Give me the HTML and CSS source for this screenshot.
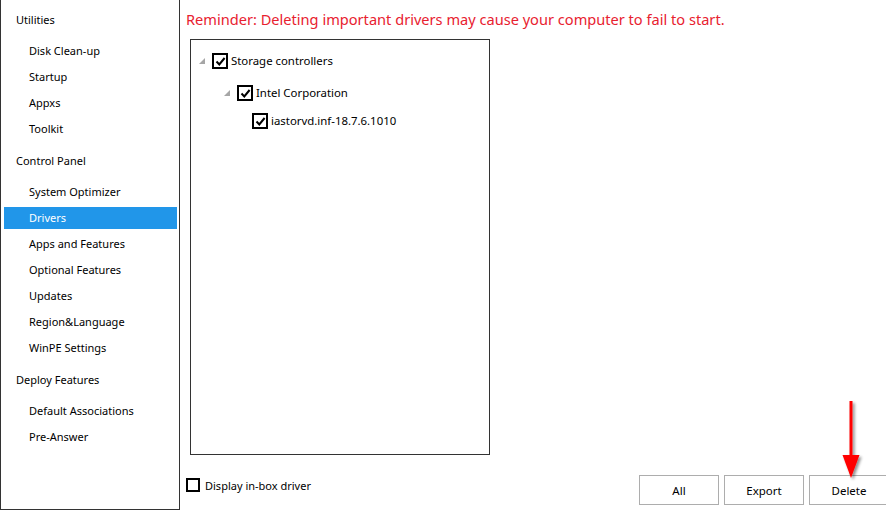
FILE: index.html
```html
<!DOCTYPE html>
<html>
<head>
<meta charset="utf-8">
<link rel="stylesheet" href="styles.css">
</head>
<body>
<div class="app">
  <nav class="sidebar">
    <div class="group">
      <div class="group-title">Utilities</div>
      <div class="item">Disk Clean-up</div>
      <div class="item">Startup</div>
      <div class="item">Appxs</div>
      <div class="item">Toolkit</div>
    </div>
    <div class="group">
      <div class="group-title">Control Panel</div>
      <div class="item">System Optimizer</div>
      <div class="item selected">Drivers</div>
      <div class="item">Apps and Features</div>
      <div class="item">Optional Features</div>
      <div class="item">Updates</div>
      <div class="item">Region&amp;Language</div>
      <div class="item">WinPE Settings</div>
    </div>
    <div class="group">
      <div class="group-title">Deploy Features</div>
      <div class="item">Default Associations</div>
      <div class="item">Pre-Answer</div>
    </div>
  </nav>
  <main class="content">
    <div class="reminder">Reminder: Deleting important drivers may cause your computer to fail to start.</div>
    <div class="tree">
      <div class="tree-row level1">
        <svg class="toggle" width="6" height="6" viewBox="0 0 6 6"><polygon points="6,0 6,6 0,6" fill="#a6a6a6"/></svg>
        <span class="check checked"><svg width="11" height="11" viewBox="0 0 11 11"><path d="M1.5 5.5 L4.3 8.5 L9.6 2" fill="none" stroke="#000" stroke-width="2"/></svg></span>
        <span class="label">Storage controllers</span>
      </div>
      <div class="tree-row level2">
        <svg class="toggle" width="6" height="6" viewBox="0 0 6 6"><polygon points="6,0 6,6 0,6" fill="#a6a6a6"/></svg>
        <span class="check checked"><svg width="11" height="11" viewBox="0 0 11 11"><path d="M1.5 5.5 L4.3 8.5 L9.6 2" fill="none" stroke="#000" stroke-width="2"/></svg></span>
        <span class="label">Intel Corporation</span>
      </div>
      <div class="tree-row level3">
        <span class="check checked"><svg width="11" height="11" viewBox="0 0 11 11"><path d="M1.5 5.5 L4.3 8.5 L9.6 2" fill="none" stroke="#000" stroke-width="2"/></svg></span>
        <span class="label">iastorvd.inf-18.7.6.1010</span>
      </div>
    </div>
    <div class="bottom">
      <label class="inbox"><span class="check small"></span><span>Display in-box driver</span></label>
      <div class="buttons">
        <button class="btn">All</button>
        <button class="btn">Export</button>
        <button class="btn">Delete</button>
      </div>
    </div>
  </main>
</div>
<svg class="arrow" width="30" height="84" viewBox="0 0 30 84">
  <defs>
    <filter id="sh" x="-50%" y="-20%" width="200%" height="140%">
      <feGaussianBlur in="SourceAlpha" stdDeviation="1.5"/>
      <feOffset dx="2" dy="2" result="b"/>
      <feComponentTransfer><feFuncA type="linear" slope="0.45"/></feComponentTransfer>
      <feMerge><feMergeNode/><feMergeNode in="SourceGraphic"/></feMerge>
    </filter>
  </defs>
  <g filter="url(#sh)">
    <rect x="12.5" y="2" width="3" height="58" fill="#ff0000"/>
    <polygon points="5.5,56 22.5,56 14,79" fill="#ff0000"/>
  </g>
</svg>
</body>
</html>
```
FILE: styles.css
```css
html, body {
  margin: 0;
  padding: 0;
  background: #fff;
  overflow: hidden;
}
body {
  width: 886px;
  height: 510px;
  font-family: "Noto Sans", "Open Sans", sans-serif;
  font-size: 11px;
  color: #000;
  position: relative;
}
.app {
  display: flex;
  height: 510px;
}
.sidebar {
  box-sizing: border-box;
  width: 180px;
  height: 510px;
  border: 1px solid #333;
  border-top: none;
  padding: 10px 2px 0 3px;
  display: flex;
  flex-direction: column;
  gap: 11px;
}
.group {
  display: flex;
  flex-direction: column;
}
.group-title {
  height: 20px;
  line-height: 20px;
  padding-left: 12px;
  margin-bottom: 6px;
}
.item {
  height: 22px;
  line-height: 22px;
  padding-left: 25px;
  margin-top: 4px;
}
.item.selected {
  background: #2196e9;
  color: #fff;
}
.content {
  flex: 1;
  display: flex;
  flex-direction: column;
  padding: 8px 0 0 6px;
}
.reminder {
  color: #e8212f;
  font-size: 14.6px;
  line-height: 22px;
  height: 22px;
}
.tree {
  box-sizing: border-box;
  margin-top: 9px;
  margin-left: 4px;
  width: 300px;
  height: 416px;
  border: 1px solid #333;
  padding-top: 13px;
  font-size: 12px;
}
.tree-row {
  display: flex;
  align-items: center;
  height: 16px;
}
.tree-row.level1 { padding-left: 8px; }
.tree-row.level2 { padding-left: 33px; margin-top: 16px; }
.tree-row.level3 { padding-left: 61px; margin-top: 12px; }
.tree .label { font-size: 11.4px; }
.toggle {
  margin-right: 7px;
  flex: none;
}
.check {
  box-sizing: border-box;
  width: 16px;
  height: 16px;
  border: 2px solid #000;
  background: #fff;
  display: flex;
  align-items: center;
  justify-content: center;
  flex: none;
}
.check.small {
  width: 14px;
  height: 14px;
}
.label {
  margin-left: 3px;
  line-height: 16px;
}
.bottom {
  display: flex;
  align-items: flex-start;
  margin-top: 20px;
}
.inbox {
  display: flex;
  align-items: center;
  gap: 5px;
  margin-top: 3px;
  height: 14px;
}
.buttons {
  margin-left: auto;
  margin-right: -3px;
  display: flex;
  gap: 5px;
}
.btn {
  box-sizing: border-box;
  width: 80px;
  height: 30px;
  border: 1px solid #adadad;
  background: #fff;
  font-family: "Noto Sans", "Open Sans", sans-serif;
  font-size: 11.5px;
  color: #000;
  padding: 0;
}
.arrow {
  position: absolute;
  left: 837px;
  top: 399px;
}
```
